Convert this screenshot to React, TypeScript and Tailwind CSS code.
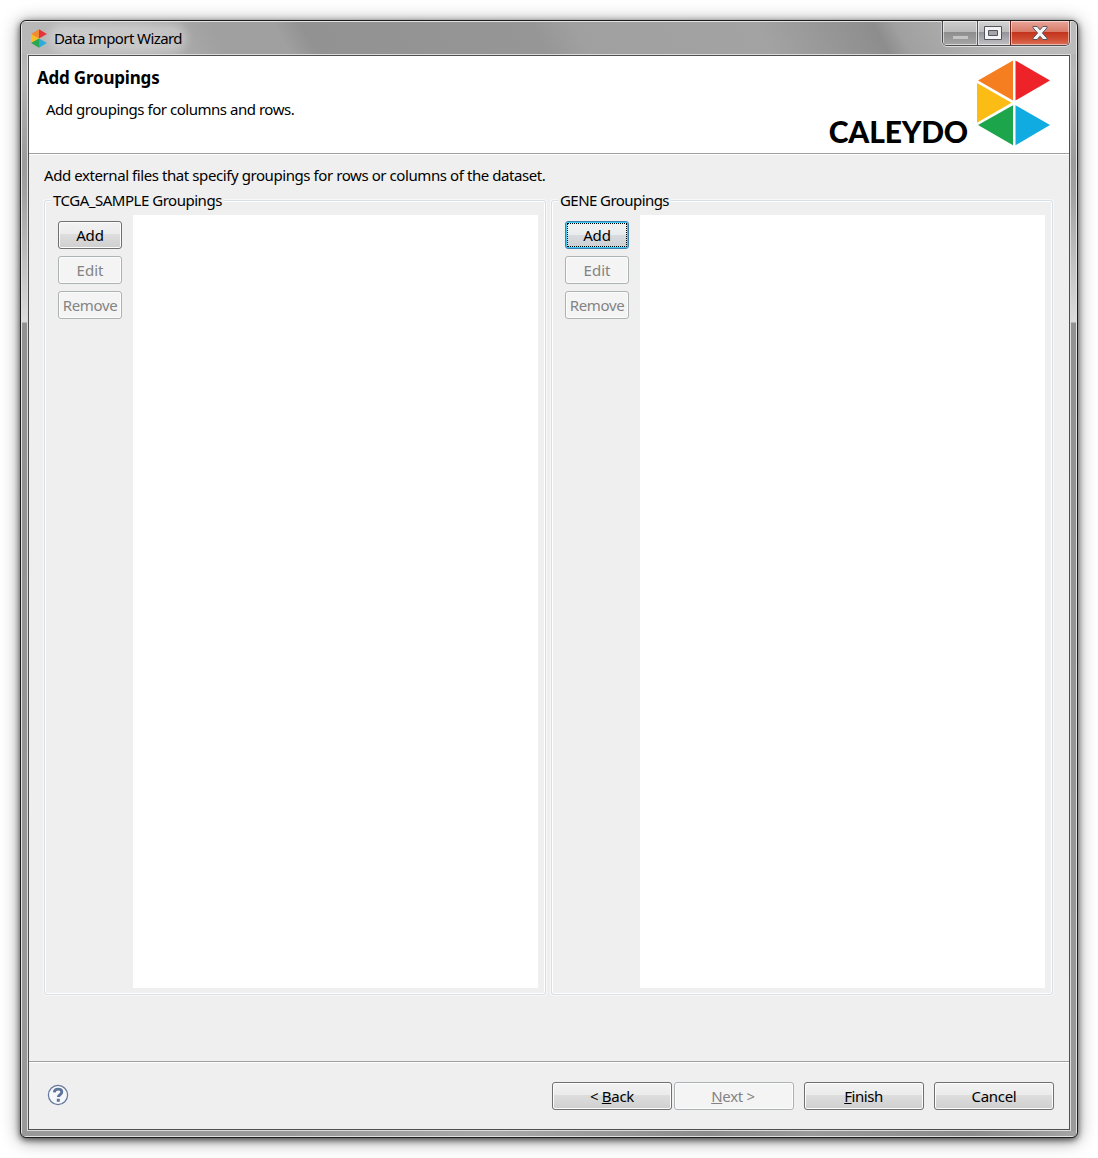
import React from "react";

const SIDE =
  "bg-[linear-gradient(180deg,#b4b4b4_0px,#b9b9b9_20px,#a9a9a9_60px,#9b9b9b_110px,#a2a2a2_140px,#dcdcdc_267px,#dcdcdc_268px,#929292_269px,#9a9a9a_100%)]";

function Button({
  children,
  wide = false,
  disabled = false,
  focused = false,
}: {
  children: React.ReactNode;
  wide?: boolean;
  disabled?: boolean;
  focused?: boolean;
}) {
  const size = wide ? "w-[120px]" : "w-16";
  const look = disabled
    ? "border-[#adb2b5] bg-[#f4f4f4] text-[#838383] shadow-[inset_0_0_0_1px_#fcfcfc]"
    : focused
      ? "border-[#3c7fb1] bg-[linear-gradient(180deg,#f2f2f2_0%,#e9ecee_50%,#d9dcde_50%,#cdd0d2_100%)] shadow-[inset_0_0_0_1px_#3fcaf5]"
      : "border-[#707070] bg-[linear-gradient(180deg,#f2f2f2_0%,#ebebeb_48%,#dddddd_48%,#cfcfcf_100%)] shadow-[inset_0_0_0_1px_#fcfcfc]";
  return (
    <button
      className={`relative flex h-7 shrink-0 items-center justify-center whitespace-nowrap rounded-[3px] border pb-px leading-5 ${size} ${look}`}
    >
      {focused && <span className="absolute inset-[1px] border border-dotted border-black" />}
      {children}
    </button>
  );
}

function Group({ title, focused = false, spacing }: { title: string; focused?: boolean; spacing: string }) {
  return (
    <section className="relative flex h-[795px] w-[502px] rounded-[3px] border border-[#d5dfe5] pl-[13px] pt-[14px] shadow-[inset_0_0_0_1px_#fff,0_0_0_1px_#f8f8f8]">
      <h2 className={`absolute -top-[11px] left-[6px] whitespace-nowrap bg-[#efefef] px-[2px] leading-5 ${spacing}`}>{title}</h2>
      <div className="mt-[6px] flex w-[75px] shrink-0 flex-col gap-[7px]">
        <Button focused={focused}><span className="tracking-[-0.1px]">Add</span></Button>
        <Button disabled>Edit</Button>
        <Button disabled><span className="tracking-[-0.35px]">Remove</span></Button>
      </div>
      <div className="h-[773px] w-[405px] bg-white" />
    </section>
  );
}

function Mark({ className }: { className: string }) {
  return (
    <svg className={className} viewBox="0 0 74 86">
      <path fill="#f57f20" d="M1 20.5 36 .5v40z" />
      <path fill="#ee2229" d="M38.5.5 73 20.5l-34.5 20z" />
      <path fill="#fbbc16" d="M0 23 34.5 42.8 0 62.8z" />
      <path fill="#1ca54b" d="M1 65 36 45.2v40z" />
      <path fill="#10abe1" d="M38.5 45.2 73 65l-34.5 20.2z" />
    </svg>
  );
}

function TitleIcon() {
  return (
    <svg className="mt-px h-[19px] w-[16px]" viewBox="0 0 16 19">
      <path fill="#f08a35" d="M0 4.9 8 .3v9.2z" />
      <path fill="#e53238" d="M8 .3l8 4.6-8 4.6z" />
      <path fill="#f7bd26" d="M0 4.9 8 9.5l-8 4.6z" />
      <path fill="#2aa653" d="M0 14.1 8 9.5v9.2z" />
      <path fill="#2aacdc" d="M8 9.5l8 4.6-8 4.6z" />
    </svg>
  );
}

function WindowControls() {
  return (
    <div className="flex h-[25px] w-[128px] overflow-hidden rounded-b-[5px] border border-t-0 border-[#4c4c50] shadow-[0_1px_0_#ddd,1px_0_0_#ddd,-1px_0_0_#c8c8c8]">
      <div className="flex w-[35px] justify-center border-r border-[#55555b] bg-[linear-gradient(180deg,#cecece_0%,#b9b9b9_45%,#8d8d8d_46%,#a6a6a6_100%)] shadow-[inset_0_0_0_1px_#ffffff90]">
        <span className="mt-[15px] h-[3px] w-[15px] bg-[#c4c4c4]" />
      </div>
      <div className="flex w-[33px] border-r border-[#6b2018] bg-[linear-gradient(180deg,#d4d4d4_0%,#bcbcbc_45%,#929298_46%,#bfbfc4_100%)] pl-[6px] shadow-[inset_0_0_0_1px_#ffffff90]">
        <svg className="mt-[5px] h-[14px] w-[18px]" viewBox="0 0 18 14">
          <path d="M.5.5h17v13H.5z" fill="#f4f4f4" stroke="#53545e" />
          <path d="M4.5 4.5h9v5h-9z" fill="#a4a4ac" stroke="#53545e" />
        </svg>
      </div>
      <div className="flex flex-1 justify-center bg-[linear-gradient(180deg,#e9a598_0%,#d97b69_45%,#c2331c_46%,#cf4b31_75%,#dc7158_100%)] shadow-[inset_0_0_0_1px_#ffffff80]">
        <svg className="mt-[5px] h-[14px] w-[16px]" viewBox="0 0 16 14">
          <path
            d="M1 .5h4.2L8 3.8 10.8.5H15v1.3L10.4 7l4.6 5.2v1.3h-4.2L8 10.2l-2.8 3.3H1v-1.3L5.6 7 1 1.8z"
            fill="#f4f4f4"
            stroke="#56545e"
          />
        </svg>
      </div>
    </div>
  );
}

export default function App() {
  return (
    <div className="h-[1158px] w-[1098px] bg-white p-5 font-['Noto_Sans','Open_Sans',sans-serif] text-[15px] text-black">
      <div className="flex h-[1118px] w-[1058px] flex-col overflow-hidden rounded-[6px] border border-[#1c1c1c] bg-[#999] shadow-[0_2px_6px_#000000a0,0_2px_18px_#00000070]">
        <div className="flex flex-1 flex-col rounded-[5px] border border-[#e2e2e2]">
          <header className="flex h-8 shrink-0 justify-between bg-[linear-gradient(62deg,#b9b9b9_0%,#b2b2b2_12%,#a0a0a0_19%,#a0a0a0_25%,#929292_27.5%,#969696_49%,#a0a0a0_53%,#a3a3a3_70%,#8d8d8d_81%,#a0a0a0_83%,#b8b8b8_93%,#bcbcbc_100%)]">
            <div className="flex items-start pl-[9px] pt-[6px]">
              <TitleIcon />
              <span className="ml-[7px] whitespace-nowrap rounded-full bg-[#ffffff48] leading-5 tracking-[-0.58px] shadow-[0_0_8px_5px_#ffffff48]">
                Data Import Wizard
              </span>
            </div>
            <div className="-mt-px mr-[6px]">
              <WindowControls />
            </div>
          </header>
          <div className="flex flex-1">
            <div className={`w-[5px] shrink-0 ${SIDE}`} />
            <main className="flex h-[1077px] w-[1044px] shrink-0 flex-col border border-[#dcdcdc]">
              <div className="flex flex-1 flex-col border border-[#4f4f4f] bg-[#efefef]">
                <div className="flex h-[98px] shrink-0 justify-between border-b border-[#9f9f9f] bg-white">
                  <div className="pl-2 pt-[10px]">
                    <h1 className="whitespace-nowrap text-[17px] font-bold leading-6 tracking-[-0.2px]">Add Groupings</h1>
                    <p className="ml-[9px] mt-[9px] whitespace-nowrap leading-5 tracking-[-0.47px]">
                      Add groupings for columns and rows.
                    </p>
                  </div>
                  <div className="flex pr-[18px]">
                    <span className="mr-[9px] mt-[57px] font-['Lato',sans-serif] text-[30px] font-black leading-9 tracking-[-0.2px]">
                      CALEYDO
                    </span>
                    <Mark className="mt-1 h-[86px] w-[74px]" />
                  </div>
                </div>
                <div className="flex h-[908px] shrink-0 flex-col border-b border-t border-b-[#9f9f9f] border-t-white pl-[15px] pt-[10px]">
                  <p className="whitespace-nowrap leading-5 tracking-[-0.42px]">
                    Add external files that specify groupings for rows or columns of the dataset.
                  </p>
                  <div className="mt-[15px] flex gap-[5px]">
                    <Group title="TCGA_SAMPLE Groupings" spacing="tracking-[-0.48px]" />
                    <Group title="GENE Groupings" spacing="tracking-[-0.56px]" focused />
                  </div>
                </div>
                <footer className="flex flex-1 items-start border-t border-white pl-[18px] pt-[19px] tracking-[-0.3px]">
                  <svg className="mt-[2px] h-[22px] w-[22px]" viewBox="0 0 22 22">
                    <circle cx="11" cy="11" r="9.6" fill="#f6f7fa" stroke="#62779b" strokeWidth="1.2" />
                    <path d="M7.3 8.4c.1-2.4 1.7-3.3 3.8-3.3 2.3 0 3.7 1.2 3.7 2.9 0 2.8-3.5 2.6-3.5 5.1" fill="none" stroke="#5f7499" strokeWidth="2.9" />
                    <path d="M9.8 14.7h3v3h-3z" fill="#5f7499" />
                  </svg>
                  <div className="ml-auto mr-[15px] flex">
                    <Button wide><span>&lt; <u>B</u>ack</span></Button>
                    <span className="w-[2px]" />
                    <Button wide disabled><span className="mr-[2px]"><u>N</u>ext &gt;</span></Button>
                    <span className="w-[10px]" />
                    <Button wide><span className="mr-px tracking-[-0.45px]"><u>F</u>inish</span></Button>
                    <span className="w-[10px]" />
                    <Button wide><span>Cancel</span></Button>
                  </div>
                </footer>
              </div>
            </main>
            <div className={`flex-1 ${SIDE}`} />
          </div>
          <div className="h-[5px] shrink-0 bg-[linear-gradient(90deg,#999,#999_25%,#a8a8a8_45%,#8c8c8c_65%,#9a9a9a_75%,#8c8c8c_90%,#a4a4a4)]" />
        </div>
      </div>
    </div>
  );
}
